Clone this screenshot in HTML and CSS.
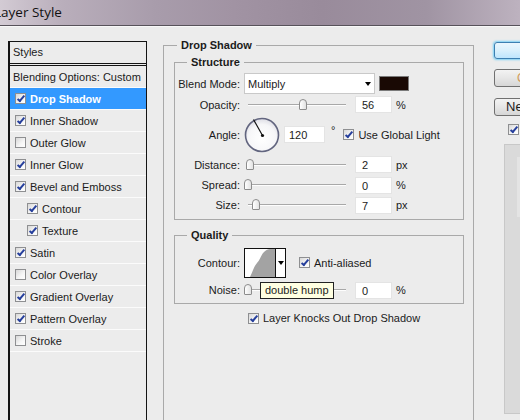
FILE: index.html
```html
<!DOCTYPE html>
<html lang="en">
<head>
  <meta charset="UTF-8">
  <title>Layer Style</title>
  <link rel="stylesheet" href="styles.css">
</head>
<body>

<!-- Window title -->
<div class="titlebar"><span class="title">Layer Style</span></div>

<div class="dialog">

  <!-- Styles list -->
  <div class="styles-panel">
    <div class="styles-head">Styles</div>
    <ul class="style-list">
      <li class="style-item plain">Blending Options: Custom</li>
      <li class="style-item selected"><span class="cb on"></span>Drop Shadow</li>
      <li class="style-item"><span class="cb on"></span>Inner Shadow</li>
      <li class="style-item"><span class="cb"></span>Outer Glow</li>
      <li class="style-item"><span class="cb on"></span>Inner Glow</li>
      <li class="style-item"><span class="cb on"></span>Bevel and Emboss</li>
      <li class="style-item sub"><span class="cb on"></span>Contour</li>
      <li class="style-item sub"><span class="cb on"></span>Texture</li>
      <li class="style-item"><span class="cb on"></span>Satin</li>
      <li class="style-item"><span class="cb"></span>Color Overlay</li>
      <li class="style-item"><span class="cb on"></span>Gradient Overlay</li>
      <li class="style-item"><span class="cb on"></span>Pattern Overlay</li>
      <li class="style-item"><span class="cb"></span>Stroke</li>
    </ul>
  </div>

  <!-- Drop Shadow settings -->
  <div class="group outer">
    <span class="caption">Drop Shadow</span>

    <div class="group structure">
      <span class="caption">Structure</span>

      <div class="row blend-row">
        <span class="lbl">Blend Mode:</span>
        <div class="select">Multiply<span class="arrow"></span></div>
        <span class="swatch"></span>
      </div>

      <div class="row opacity-row">
        <span class="lbl">Opacity:</span>
        <div class="slider"><span class="thumb" style="left: 55px"></span></div>
        <div class="field">56</div>
        <span class="unit">%</span>
      </div>

      <div class="row angle-row">
        <span class="lbl">Angle:</span>
        <svg class="dial" width="36" height="37" viewBox="0 0 36 37">
          <defs>
            <radialGradient id="dialFill" cx="0.5" cy="0.6" r="0.6">
              <stop offset="0" stop-color="#ffffff"/>
              <stop offset="0.7" stop-color="#f6f6f8"/>
              <stop offset="1" stop-color="#dcdce4"/>
            </radialGradient>
          </defs>
          <circle cx="18" cy="19" r="16.5" fill="url(#dialFill)" stroke="#62657f" stroke-width="1.6"/>
          <line x1="18.5" y1="19.5" x2="9.5" y2="3.5" stroke="#111" stroke-width="1.2"/>
          <circle cx="18.5" cy="19.5" r="1.6" fill="#111"/>
        </svg>
        <div class="field angle">120</div>
        <span class="deg">°</span>
        <span class="cb on"></span>
        <span class="cb-text">Use Global Light</span>
      </div>

      <div class="row dist-row">
        <span class="lbl">Distance:</span>
        <div class="slider"><span class="thumb" style="left: 2px"></span></div>
        <div class="field">2</div>
        <span class="unit">px</span>
      </div>

      <div class="row">
        <span class="lbl">Spread:</span>
        <div class="slider"><span class="thumb" style="left: 0px"></span></div>
        <div class="field">0</div>
        <span class="unit">%</span>
      </div>

      <div class="row">
        <span class="lbl">Size:</span>
        <div class="slider"><span class="thumb" style="left: 8px"></span></div>
        <div class="field">7</div>
        <span class="unit">px</span>
      </div>
    </div>

    <div class="group quality">
      <span class="caption">Quality</span>

      <div class="row contour-row">
        <span class="lbl">Contour:</span>
        <div class="contour">
          <svg class="curve" width="30" height="28" viewBox="0 0 30 28">
            <path d="M5 28 C8 22 9 17 12 14 C15 11 16 6 19 3 C21 1 23 0 25 0 L30 0 L30 28 Z" fill="#a3a3a3"/>
          </svg>
          <span class="contour-drop"><span class="arrow"></span></span>
        </div>
        <span class="cb on"></span>
        <span class="cb-text">Anti-aliased</span>
      </div>

      <div class="row noise-row">
        <span class="lbl">Noise:</span>
        <div class="slider">
          <span class="thumb" style="left: 0px"></span>
          <span class="tooltip">double hump</span>
        </div>
        <div class="field">0</div>
        <span class="unit">%</span>
      </div>
    </div>

    <div class="row knock-row">
      <span class="cb on"></span>
      <span class="cb-text">Layer Knocks Out Drop Shadow</span>
    </div>
  </div>

  <!-- Dialog buttons -->
  <div class="side">
    <div class="btn ok">OK</div>
    <div class="btn cancel">Cancel</div>
    <div class="btn new">New Style...</div>
    <span class="cb on side-cb"></span>
    <div class="preview"><div class="preview-inner"></div></div>
  </div>

</div>

</body>
</html>
```

FILE: styles.css
```css
body {
    margin: 0;
    width: 520px;
    height: 420px;
    overflow: hidden;
    background-color: #ececec;
    font: 11px "Liberation Sans", Arial, sans-serif;
    color: #1b1b1b;
}

/* title bar */
.titlebar {
    height: 25px;
    border-bottom: 1px solid #57525a;
    box-shadow: 0 1px 0 #f8f8f8;
    background: linear-gradient(90deg, #d3cbd4 0%, #b9aebb 12%, #a89cab 30%, #a193a3 45%, #998b9b 62%, #a094a3 82%, #bdb2bf 100%);
    overflow: hidden;
    white-space: nowrap;
}
.title {
    display: inline-block;
    margin-left: -6px;
    font: 13.5px "Open Sans", "Liberation Sans", sans-serif;
    line-height: 24px;
    color: #111;
}

.dialog {
    display: flex;
    align-items: flex-start;
    height: 393px;
    margin-top: 1px;
    overflow: hidden;
}

/* styles list */
.styles-panel {
    flex: none;
    box-sizing: border-box;
    width: 139px;
    height: 379px;
    margin: 14px 0 0 8px;
    border: 1px solid #141414;
    border-left-width: 2px;
    border-bottom: none;
}
.styles-head {
    height: 21px;
    line-height: 21px;
    padding-left: 3px;
    border-bottom: 1px solid #141414;
    margin-bottom: 1px;
}
.style-list {
    list-style: none;
    margin: 0;
    padding: 0;
    border-top: 1px solid #141414;
}
.style-item {
    display: flex;
    align-items: center;
    height: 21px;
    padding-left: 5px;
    border-bottom: 1px solid #fbfbfb;
    white-space: nowrap;
}
.style-item.plain {
    padding-left: 3px;
}
.style-item.sub {
    padding-left: 17px;
}
.style-item.selected {
    background-color: #3399ff;
    color: #fff;
    font-weight: bold;
}
.style-item .cb {
    margin-right: 4px;
}

/* checkbox */
.cb {
    position: relative;
    display: inline-block;
    flex: none;
    box-sizing: border-box;
    width: 11px;
    height: 11px;
    border: 1px solid #8e8f91;
    background: linear-gradient(135deg, #d8d8d8, #f6f6f6 60%, #ffffff);
}
.cb.on::after {
    content: "";
    position: absolute;
    left: 3px;
    top: 0px;
    width: 2px;
    height: 6px;
    border-right: 2px solid #263f9c;
    border-bottom: 2px solid #263f9c;
    transform: rotate(40deg);
}
.cb-text {
    margin-left: 4px;
    white-space: nowrap;
}

/* group boxes */
.group {
    position: relative;
    flex: none;
    box-sizing: border-box;
    border: 1px solid #a9a9a9;
}
.caption {
    position: absolute;
    top: -7px;
    padding: 0 4px;
    line-height: 13px;
    font-weight: bold;
    background-color: #ececec;
    white-space: nowrap;
}
.outer {
    width: 311px;
    height: 375px;
    margin: 18px 0 0 16px;
    border-bottom: none;
}
.outer > .caption {
    left: 13px;
}
.structure {
    width: 290px;
    margin: 16px 0 0 10px;
    padding: 10px 0 4px;
}
.structure > .caption,
.quality > .caption {
    left: 12px;
}
.quality {
    width: 290px;
    margin: 15px 0 0 10px;
    padding: 11px 0 3px;
}

/* rows */
.row {
    display: flex;
    align-items: center;
    height: 20px;
}
.row > * {
    flex: none;
}
.lbl {
    width: 65px;
    margin-right: 4px;
    text-align: right;
    white-space: nowrap;
}
.blend-row { height: 21px; }
.opacity-row { height: 21px; }
.angle-row { height: 39px; }
.dist-row { height: 21px; }

.select {
    box-sizing: border-box;
    display: flex;
    align-items: center;
    width: 131px;
    height: 21px;
    padding-left: 3px;
    background-color: #fff;
    border: 1px solid #c9c9c9;
}
.arrow {
    width: 0;
    height: 0;
    border-top: 4px solid #000;
    border-left: 3.5px solid transparent;
    border-right: 3.5px solid transparent;
}
.select .arrow {
    margin-left: auto;
    margin-right: 3px;
}
.swatch {
    box-sizing: border-box;
    width: 30px;
    height: 15px;
    margin-left: 4px;
    background-color: #190904;
    border: 1px solid #7a7a7a;
}

.slider {
    position: relative;
    width: 106px;
    height: 20px;
}
.slider::before {
    content: "";
    position: absolute;
    left: 4px;
    right: 4px;
    top: 9px;
    height: 1px;
    background-color: #a8a8a8;
    border-bottom: 1px solid #fdfdfd;
}
.thumb {
    position: absolute;
    top: 4px;
    box-sizing: border-box;
    width: 8px;
    height: 11px;
    border: 1px solid #8c8c8c;
    border-radius: 4px 4px 1px 1px;
    background: linear-gradient(90deg, #ffffff, #e2e2e2);
}

.field {
    box-sizing: border-box;
    width: 37px;
    height: 17px;
    margin-left: 5px;
    padding-left: 6px;
    line-height: 17px;
    background-color: #fff;
    border: 1px solid #e4e4e4;
}
.unit {
    margin-left: 4px;
}

.field.angle {
    width: 41px;
    margin-left: 4px;
    padding-left: 4px;
}
.deg {
    align-self: flex-start;
    margin: 10px 0 0 6px;
    line-height: 11px;
}
.angle-row .cb {
    margin-left: 8px;
}

/* contour picker */
.contour-row {
    height: 31px;
}
.contour {
    display: flex;
    box-sizing: border-box;
    width: 42px;
    height: 30px;
    border: 1px solid #111;
    background-color: #fff;
}
.curve {
    display: block;
}
.contour-drop {
    display: flex;
    align-items: center;
    justify-content: center;
    flex: 1;
    border-left: 1px solid #111;
}
.contour-row .cb {
    margin-left: 13px;
}
.noise-row {
    margin-top: 2px;
}
.tooltip {
    position: absolute;
    left: 16px;
    top: 2px;
    padding: 0 4px;
    height: 15px;
    line-height: 15px;
    white-space: nowrap;
    background-color: #ffffe1;
    border: 1px solid #222;
    font-size: 11px;
}

.knock-row {
    margin: 4px 0 0 84px;
}

/* right column */
.side {
    flex: none;
    display: flex;
    flex-direction: column;
    align-items: flex-start;
    margin-left: 20px;
}
.btn {
    box-sizing: border-box;
    width: 80px;
    text-align: center;
    border-radius: 3px;
    border: 1px solid #707070;
    background: linear-gradient(#f3f3f3, #e6e6e6 50%, #d6d6d6);
    font: 12px "Liberation Sans", Arial, sans-serif;
    white-space: nowrap;
}
.ok {
    height: 17px;
    margin-top: 15px;
    border-color: #3c7fb1;
    box-shadow: 0 0 2px 1px #7cd0f5;
    background: linear-gradient(#eaf6fd, #d9f0fc 50%, #bee6fd);
    color: transparent;
}
.cancel {
    height: 18px;
    margin-top: 10px;
    padding-left: 22px;
    text-align: left;
    line-height: 16px;
    color: #d29b5a;
}
.new {
    height: 18px;
    margin-top: 11px;
    padding-left: 11px;
    text-align: left;
    line-height: 16px;
    font-size: 13px;
    width: 90px;
}
.side-cb {
    margin: 8px 0 0 14px;
}
.preview {
    box-sizing: border-box;
    width: 60px;
    height: 270px;
    margin: 9px 0 0 10px;
    padding: 12px 0 0 12px;
    border: 1px solid #c8c8c8;
    background-color: #dadada;
}
.preview-inner {
    height: 60px;
    background-color: #e4e4e4;
}
```
